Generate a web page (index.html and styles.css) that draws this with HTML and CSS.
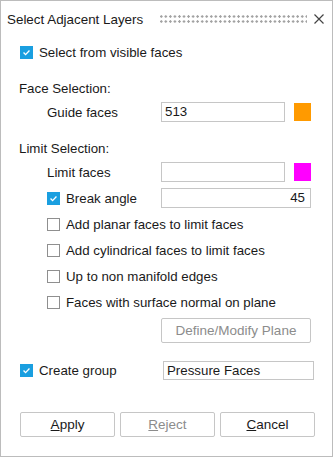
FILE: index.html
```html
<!DOCTYPE html>
<html lang="en">
<head>
    <meta charset="UTF-8">
    <meta name="viewport" content="width=device-width, initial-scale=1.0">
    <title>Select Adjacent Layers</title>
    <link rel="stylesheet" href="styles.css">
</head>
<body>
    <div class="dialog">
        <div class="titlebar">
            <span class="title">Select Adjacent Layers</span>
            <span class="grip"></span>
            <svg class="close" width="10" height="10" viewBox="0 0 10 10">
                <path d="M0.5 0.5 L9.5 9.5 M9.5 0.5 L0.5 9.5" stroke="#444" stroke-width="1.2" fill="none"/>
            </svg>
        </div>

        <div class="content">
            <div class="row row-visible">
                <span class="check on"><svg viewBox="0 0 13 13"><path d="M3 6.6 L5.4 9 L10 4.2"/></svg></span>
                <span>Select from visible faces</span>
            </div>

            <div class="heading">Face Selection:</div>
            <div class="row indent tight">
                <span class="field-label">Guide faces</span>
                <span class="input short">513</span>
                <span class="swatch orange"></span>
            </div>

            <div class="heading">Limit Selection:</div>
            <div class="row indent tight">
                <span class="field-label">Limit faces</span>
                <span class="input short"></span>
                <span class="swatch magenta"></span>
            </div>
            <div class="row indent">
                <span class="field-label">
                    <span class="check on"><svg viewBox="0 0 13 13"><path d="M3 6.6 L5.4 9 L10 4.2"/></svg></span>
                    <span>Break angle</span>
                </span>
                <span class="input wide number">45</span>
            </div>
            <div class="row indent">
                <span class="check"></span>
                <span>Add planar faces to limit faces</span>
            </div>
            <div class="row indent">
                <span class="check"></span>
                <span>Add cylindrical faces to limit faces</span>
            </div>
            <div class="row indent">
                <span class="check"></span>
                <span>Up to non manifold edges</span>
            </div>
            <div class="row indent">
                <span class="check"></span>
                <span>Faces with surface normal on plane</span>
            </div>
            <div class="row plane-row">
                <button class="btn plane" disabled>Define/Modify Plane</button>
            </div>

            <div class="row row-group">
                <span class="group-label">
                    <span class="check on"><svg viewBox="0 0 13 13"><path d="M3 6.6 L5.4 9 L10 4.2"/></svg></span>
                    <span>Create group</span>
                </span>
                <span class="input group">Pressure Faces</span>
            </div>

            <div class="actions">
                <button class="btn"><u>A</u>pply</button>
                <button class="btn" disabled><u>R</u>eject</button>
                <button class="btn"><u>C</u>ancel</button>
            </div>
        </div>
    </div>
</body>
</html>
```

FILE: styles.css
```css
/* Dialog styles */
:root {
    --text-color: #1a1a1a;
    --muted-color: #8c8c8c;
    --border-color: #c6c6c6;
    --check-color: #1a9fe0;
}

* {
    margin: 0;
    padding: 0;
    box-sizing: border-box;
}

body {
    font-family: 'Liberation Sans', Arial, sans-serif;
    font-size: 13.3px;
    color: var(--text-color);
    background-color: #fff;
}

.dialog {
    width: 333px;
    height: 457px;
    border: 1px solid #bcbcbc;
    background-color: #fff;
}

/* Title bar */
.titlebar {
    height: 36px;
    display: flex;
    align-items: center;
    padding-left: 6px;
}

.title {
    width: 153px;
    font-size: 13.4px;
}

.grip {
    width: 147px;
    height: 10px;
    background-image: radial-gradient(circle, #a2a2a2 1.1px, transparent 1.4px);
    background-size: 4.55px 5px;
    background-position: -1px 0;
}

.close {
    margin-left: 7px;
}

/* Content */
.content {
    padding-left: 18px;
}

.row {
    height: 20px;
    margin-top: 6px;
    display: flex;
    align-items: center;
}

.row-visible {
    margin-top: 5px;
    padding-left: 1px;
}

.heading {
    height: 20px;
    margin-top: 17px;
    line-height: 20px;
}

.indent {
    padding-left: 28px;
}

.row.tight {
    margin-top: 3px;
}

.check {
    width: 13px;
    height: 13px;
    flex: none;
    margin-right: 6px;
    border: 1px solid #8f8f8f;
    background-color: #fff;
}

.check.on {
    border-color: var(--check-color);
    background-color: var(--check-color);
}

.check svg {
    display: block;
    width: 11px;
    height: 11px;
}

.check path {
    fill: none;
    stroke: #fff;
    stroke-width: 1.6;
}

.field-label {
    width: 114px;
    flex: none;
    display: flex;
    align-items: center;
}

.input {
    height: 20px;
    border: 1px solid var(--border-color);
    padding: 0 3px;
    line-height: 18px;
    background-color: #fff;
}

.input.short {
    width: 124px;
}

.input.wide {
    width: 150px;
}

.input.number {
    text-align: right;
    padding-right: 5px;
}

.swatch {
    width: 17px;
    height: 18px;
    margin-left: 9px;
}

.swatch.orange {
    background-color: #ff9a00;
}

.swatch.magenta {
    background-color: #ff00ff;
}

.plane-row {
    height: 25px;
    padding-left: 142px;
}

.btn {
    height: 25px;
    border: 1px solid var(--border-color);
    border-radius: 2px;
    background-color: #fff;
    font-family: inherit;
    font-size: 13.5px;
    color: var(--text-color);
}

.btn:disabled {
    color: var(--muted-color);
}

.btn.plane {
    width: 150px;
}

.row-group {
    margin-top: 17px;
}

.group-label {
    width: 144px;
    flex: none;
    display: flex;
    align-items: center;
    padding-left: 1px;
}

.input.group {
    width: 151px;
    height: 19px;
    line-height: 17px;
}

.actions {
    display: grid;
    grid-template-columns: repeat(3, 95px);
    gap: 5px;
    margin-top: 32px;
    padding-left: 1px;
}
```
